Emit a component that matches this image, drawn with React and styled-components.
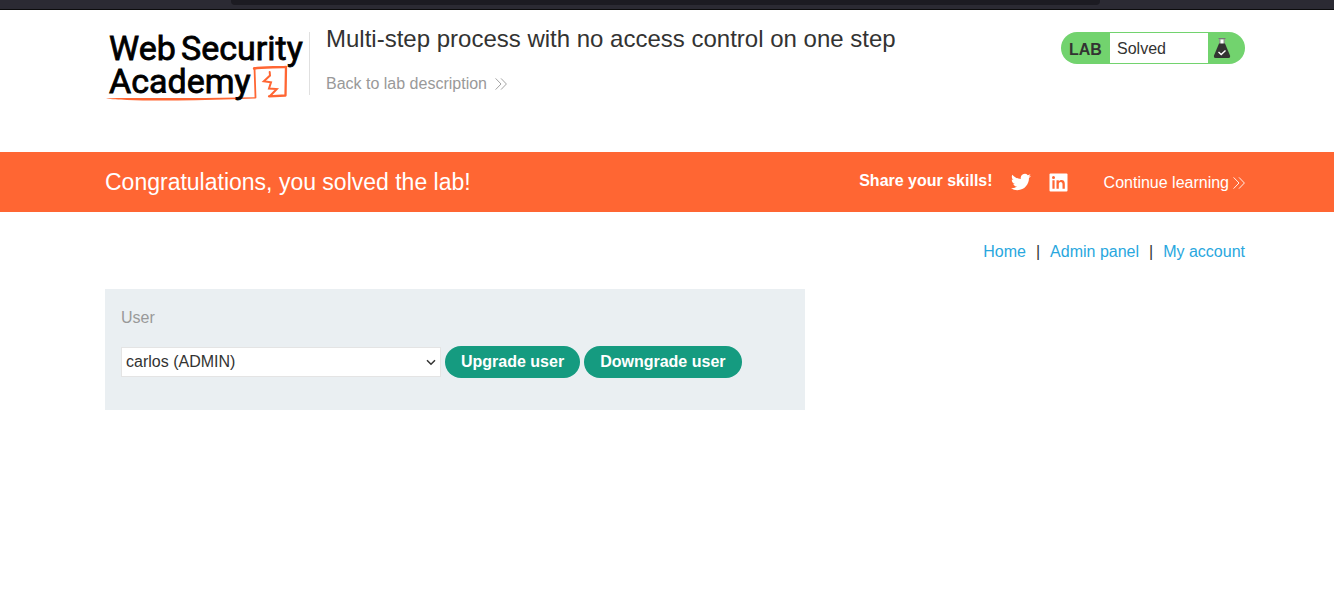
import React from "react";
import styled, { createGlobalStyle } from "styled-components";

const GlobalStyle = createGlobalStyle`
  * { box-sizing: border-box; }
  body {
    margin: 0;
    background: #fff;
    color: #333332;
    font: 16px/24px "Liberation Sans", Arial, sans-serif;
  }
  a { text-decoration: none; }
`;

const BrowserEdge = styled.div`
  height: 10px;
  padding: 0 234px 0 231px;
  background: #2b2a33;
  border-bottom: 1px solid #0c0c0d;
`;

const AddressBar = styled.div`
  height: 5px;
  background: #1c1b22;
  border-radius: 0 0 4px 4px;
`;

const Container = styled.div`
  padding: 0 89px 0 105px;
`;

const Header = styled(Container).attrs({ as: "header" })`
  display: flex;
  align-items: flex-start;
  min-height: 142px;
  padding-top: 12px;
`;

const LogoLink = styled.a`
  display: block;
  flex: none;
  width: 205px;
  margin-top: 10px;
  height: 63px;
  border-right: 1px solid #e0e0e0;
  svg { display: block; overflow: visible; }
`;

const Titles = styled.div`
  flex: 1;
  padding-left: 16px;
`;

const Title = styled.h1`
  margin: 0 0 16px;
  font-size: 24px;
  line-height: 34px;
  font-weight: 400;
`;

const BackLink = styled.a`
  display: inline-flex;
  align-items: center;
  gap: 8px;
  color: #999;
`;

const LabStatus = styled.div`
  display: flex;
  align-items: center;
  width: 184px;
  height: 32px;
  margin-top: 10px;
  padding: 1px 0;
  border-radius: 16px;
  background: #72d36e;
  line-height: 30px;
`;

const LabTag = styled.strong`
  width: 49px;
  padding: 3px 0 0 8px;
`;

const LabState = styled.span`
  width: 98px;
  height: 30px;
  padding: 1px 0 0 7px;
  background: #fff;
`;

const FlaskSlot = styled.span`
  padding-left: 5px;
  svg { display: block; }
`;

const Banner = styled(Container).attrs({ as: "section" })`
  display: flex;
  align-items: center;
  min-height: 60px;
  background: #ff6633;
  color: #fff;
`;

const BannerTitle = styled.h2`
  flex: 1;
  margin: 0;
  font-size: 23px;
  font-weight: 400;
`;

const ShareLabel = styled.strong`
  padding-bottom: 2px;
  margin-right: 18px;
`;

const ShareLink = styled.a`
  margin-right: ${(p) => p.$gap};
  svg { display: block; }
`;

const ContinueLink = styled.a`
  display: flex;
  align-items: center;
  gap: 4px;
  padding-top: 2px;
  color: #fff;
`;

const Nav = styled(Container).attrs({ as: "nav" })`
  display: flex;
  justify-content: flex-end;
  gap: 10px;
  padding-top: 28px;
  padding-bottom: 25px;
  a { color: #29a7de; }
`;

const Form = styled.form`
  width: 700px;
  max-width: 100%;
  min-height: 121px;
  padding: 17px 16px 16px;
  background: #eaeff2;
`;

const Label = styled.label`
  display: block;
  margin-bottom: 16px;
  color: #999;
`;

const Controls = styled.div`
  display: flex;
  align-items: center;
  gap: 4px;
`;

const SelectBox = styled.div`
  position: relative;
  width: 320px;
  svg { position: absolute; right: 5px; top: 12px; pointer-events: none; }
`;

const Select = styled.select`
  display: block;
  width: 100%;
  height: 30px;
  padding: 0 4px;
  border: 1px solid #e4e4e4;
  border-radius: 0;
  appearance: none;
  background: #fff;
  color: #333332;
  font: inherit;
`;

const Button = styled.button`
  height: 32px;
  padding: 0 16px;
  border: 0;
  border-radius: 16px;
  background: #159b80;
  color: #fff;
  font: inherit;
  font-weight: 700;
`;

const Chevrons = () => (
  <svg width="12" height="12" viewBox="0 0 12 12" fill="none" stroke="currentColor" strokeWidth="0.9" aria-hidden="true">
    <path d="M0.6 0.4 6 6 0.6 11.6M6 0.4 11.4 6 6 11.6" />
  </svg>
);

const Logo = () => (
  <svg width="200" height="72" viewBox="0 0 200 72" role="img" aria-label="Web Security Academy">
    <path d="M1 66.3C20 65.6 60 66.4 100 66L150 65.200V66.600L128 67.200C90 68.400 50 69 22 68C14 67.700 6 67.400 1 66.300Z" fill="#ff6633" />
    <g fill="none" stroke="#ff6633" strokeLinejoin="round" strokeLinecap="round">
      <path d="M150.500 65.500 149.500 36" strokeWidth="1.800" />
      <path d="M149 36.500C158 34.800 170 35.600 181 34.800L180.500 63.500 164 64.300" strokeWidth="2.300" />
      <path d="M164.700 40 165 43.500 158.800 49.300 166 50.300 164 56.500 171.800 57 165 64" strokeWidth="2" strokeLinejoin="miter" />
    </g>
    <g fontFamily="Roboto, sans-serif" fontSize="34" fill="#000" stroke="#000" strokeWidth="0.8">
      <text x="4" y="28">Web</text>
      <text x="76" y="28">Security</text>
      <text x="4" y="61">Academy</text>
    </g>
  </svg>
);

const Flask = () => (
  <svg width="18" height="22" viewBox="0 0 18 22" aria-hidden="true">
    <path d="M6 2H12V7H6Z" fill="#8a9a88" />
    <path d="M7.500 2.500H10.500V7H7.500Z" fill="#fff" />
    <path d="M5.500 1.500H12.500" stroke="#777" />
    <path d="M6 6.500H12L17 18.500Q17.500 21 15.500 21H2.500Q.5 21 1 18.500Z" fill="#333332" />
    <path d="M5.500 15 8.200 17.500 12.500 13.500" fill="none" stroke="#fff" strokeWidth="1.400" />
  </svg>
);

const Twitter = () => (
  <svg width="20" height="20" viewBox="0 0 24 24" fill="#fff" aria-hidden="true">
    <path d="M23.953 4.570a10 10 0 0 1-2.825.775 4.958 4.958 0 0 0 2.163-2.723c-.951.555-2.005.959-3.127 1.184a4.920 4.920 0 0 0-8.384 4.482C7.690 8.095 4.067 6.130 1.640 3.162a4.822 4.822 0 0 0-.666 2.475c0 1.710.870 3.213 2.188 4.096a4.904 4.904 0 0 1-2.228-.616v.060a4.923 4.923 0 0 0 3.946 4.827 4.996 4.996 0 0 1-2.212.085 4.936 4.936 0 0 0 4.604 3.417 9.867 9.867 0 0 1-6.102 2.105c-.390 0-.779-.023-1.170-.067a13.995 13.995 0 0 0 7.557 2.209c9.053 0 13.998-7.496 13.998-13.985 0-.210 0-.420-.015-.630A9.935 9.935 0 0 0 24 4.590z" />
  </svg>
);

const LinkedIn = () => (
  <svg width="19" height="19" viewBox="0 0 19 19" aria-hidden="true">
    <rect x="0.500" y="0.500" width="18" height="18" rx="1" fill="#fff" />
    <g fill="#ff6633">
      <circle cx="4.500" cy="4.500" r="1.500" />
      <path d="M3.400 7.200H5.600V15.800H3.400ZM7.500 7.200H9.800V8.400C11.500 6.300 15.800 6.400 15.800 10.700V15.800H13.500V11.200C13.500 8.200 9.800 8.300 9.800 11.200V15.800H7.500Z" />
    </g>
  </svg>
);

export default function App() {
  return (
    <>
      <GlobalStyle />
      <BrowserEdge><AddressBar /></BrowserEdge>
      <Header>
        <LogoLink href="#"><Logo /></LogoLink>
        <Titles>
          <Title>Multi-step process with no access control on one step</Title>
          <BackLink href="#">Back to lab description <Chevrons /></BackLink>
        </Titles>
        <LabStatus>
          <LabTag>LAB</LabTag>
          <LabState>Solved</LabState>
          <FlaskSlot><Flask /></FlaskSlot>
        </LabStatus>
      </Header>
      <Banner>
        <BannerTitle>Congratulations, you solved the lab!</BannerTitle>
        <ShareLabel>Share your skills!</ShareLabel>
        <ShareLink href="#" aria-label="Twitter" $gap="18px"><Twitter /></ShareLink>
        <ShareLink href="#" aria-label="LinkedIn" $gap="36px"><LinkedIn /></ShareLink>
        <ContinueLink href="#">Continue learning <Chevrons /></ContinueLink>
      </Banner>
      <Nav>
        <a href="#">Home</a><span>|</span>
        <a href="#">Admin panel</a><span>|</span>
        <a href="#">My account</a>
      </Nav>
      <Container as="main">
        <Form onSubmit={(e) => e.preventDefault()}>
          <Label htmlFor="user">User</Label>
          <Controls>
            <SelectBox>
              <Select id="user" defaultValue="carlos">
                <option value="carlos">carlos (ADMIN)</option>
              </Select>
              <svg width="10" height="7" viewBox="0 0 10 7" fill="none" stroke="#333332" strokeWidth="1.500" aria-hidden="true">
                <path d="M1 1.200 5 5.200 9 1.200" />
              </svg>
            </SelectBox>
            <Button type="submit">Upgrade user</Button>
            <Button type="submit">Downgrade user</Button>
          </Controls>
        </Form>
      </Container>
    </>
  );
}
